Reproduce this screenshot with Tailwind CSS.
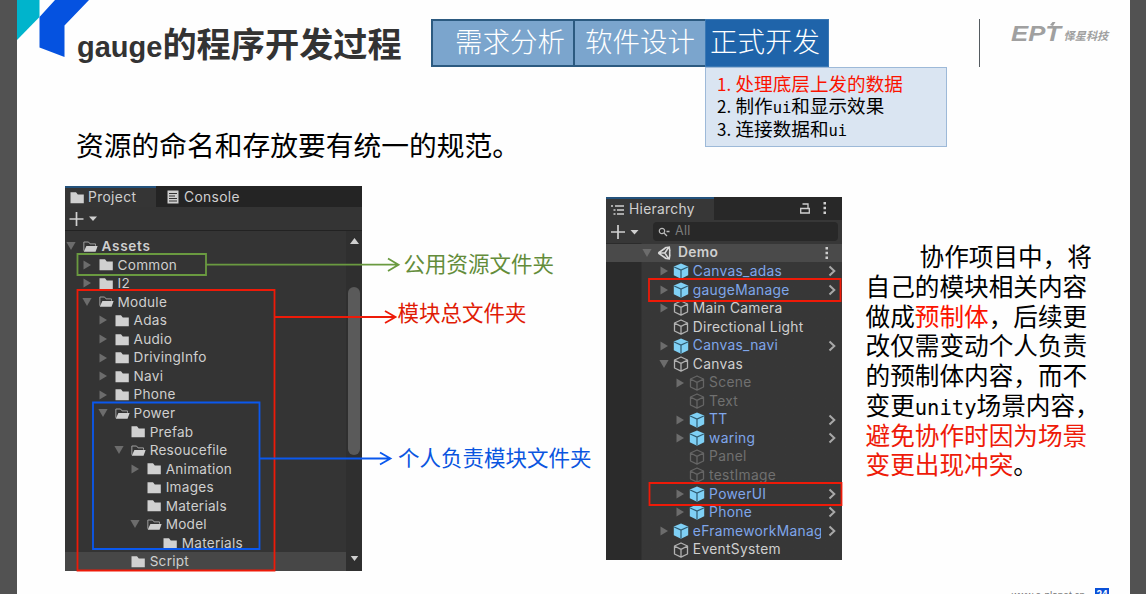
<!DOCTYPE html>
<html lang="zh-CN">
<head>
<meta charset="utf-8">
<title>gauge的程序开发过程</title>
<script src="https://cdn.jsdelivr.net/npm/@tailwindcss/browser@4"></script>
</head>
<body class="bg-white">
<svg class="hidden">
  <symbol id="folder" viewBox="0 0 15 13"><path d="M.5 1.200H6l1.800 2.200h6V12.200H.5z" fill="#d0d0d0"/></symbol>
  <symbol id="folder-open" viewBox="0 0 16 13"><path d="M.9 11V1.700h5l1.600 2h5.800v2" fill="none" stroke="#a5a5a5" stroke-width="1"/><path d="M3.600 6h12L13.400 12.200H.8z" fill="#d0d0d0"/></symbol>
  <symbol id="right" viewBox="0 0 10 10"><path d="M1.500.6v8.800L9 5z" fill="#6c6c6c"/></symbol>
  <symbol id="down" viewBox="0 0 10 10"><path d="M.4 1h9.200L5 9z" fill="#6c6c6c"/></symbol>
  <symbol id="cube-blue" viewBox="0 0 16 16"><path d="M8 .4l7.200 3v8.800L8 15.800.8 12.200V3.400z" fill="#7fd0f5"/><path d="M1.200 4L8 7l6.800-3M8 7v8.500" fill="none" stroke="#2f5a70" stroke-width="1.200"/></symbol>
  <symbol id="cube" viewBox="0 0 16 16"><path d="M8 1l6.500 3v8L8 15.200 1.500 12V4zM1.500 4L8 7.300 14.500 4M8 7.300v7.700" fill="none" stroke="currentColor" stroke-width="1.300" stroke-linejoin="round" opacity=".8"/></symbol>
  <symbol id="unity" viewBox="0 0 16 16"><path d="M1.500 8L10 2M1.500 8l8.500 6M1.500 8H9M9 8l4-6M9 8l4 6M9 2l5-.8 .8 5M9 14l5 .8 .8-5M14.500 5v6" fill="none" stroke="#d8d8d8" stroke-width="1.800"/></symbol>
  <symbol id="chev" viewBox="0 0 8 12"><path d="M1.500 1.500L6.300 6 1.500 10.500" fill="none" stroke="#a8a8a8" stroke-width="2"/></symbol>
</svg>

<div class="relative flex h-[594px] w-[1146px] overflow-hidden bg-[#fefefe] font-['Noto_Sans_CJK_SC',sans-serif] text-black">
  <div class="w-[17px] shrink-0 bg-[#525252]"></div>

  <main class="flex w-[1113px] shrink-0 flex-col">
    <header class="flex h-[67px] shrink-0">
      <svg class="h-[67px] w-[60px] shrink-0 overflow-visible" viewBox="17 0 60 67">
        <path d="M17 0h22.500v17L17 40z" fill="#00b4cc"/>
        <path d="M55 0h34L64.500 25.500V57L39.500 47.500V17z" fill="#0552e0"/>
      </svg>
      <h1 class="flex h-[67px] w-[354px] shrink-0 items-baseline whitespace-nowrap pt-[5px] text-[34.200px] font-bold leading-[74px] text-[#333]"><span class="font-['Liberation_Sans',sans-serif] text-[29px]">gauge</span>的程序开发过程</h1>
      <nav class="mt-[19px] flex h-[48px] w-[398px] text-[27.500px] font-light leading-[38px] text-white">
        <div class="w-[142px] border-2 border-r-0 border-[#2c5a80] bg-[#7ba5cd] pl-[22px]">需求分析</div>
        <div class="w-[132px] border-2 border-r-0 border-[#2c5a80] bg-[#7ba5cd] pl-[10px]">软件设计</div>
        <div class="w-[124px] border border-[#3a78b4] bg-[#1f64aa] pl-[4px] leading-[40px]">正式开发</div>
      </nav>
      <div class="ml-[150px] mt-[19px] h-[48px] w-px bg-[#555b60]"></div>
      <svg class="ml-[30px] mt-[18px] h-[30px] w-[102px]" viewBox="0 0 102 30">
        <text x="1" y="22.500" font-family="Liberation Sans" font-weight="bold" font-style="italic" font-size="22" fill="#a0a0a0" textLength="50" lengthAdjust="spacingAndGlyphs">EPT</text>
        <path d="M40 7l2.500-3h3L43 8z" fill="#a0a0a0"/>
        <text x="53.500" y="21.500" font-family="Noto Sans CJK SC" font-weight="bold" font-style="italic" font-size="11.200" fill="#a0a0a0">怿星科技</text>
      </svg>
    </header>

    <section class="flex h-[119px] shrink-0 justify-between">
      <p class="ml-[59px] mt-[56px] whitespace-nowrap text-[27.750px] leading-[42px]">资源的命名和存放要有统一的规范。</p>
      <ol class="mr-[183px] h-[80px] w-[242px] border border-[#9db9d8] bg-[#dae5f2] pl-[11px] pt-[4px] text-[18.600px] leading-[22px]">
        <li class="flex h-[22.300px] items-baseline text-[#fb1300]"><span class="w-[18.500px] text-[17px]">1.</span>处理底层上发的数据</li>
        <li class="flex h-[22.300px] items-baseline"><span class="w-[18.500px] text-[17px]">2.</span>制作<span class="font-['DejaVu_Sans_Mono',monospace] text-[15.450px]">ui</span>和显示效果</li>
        <li class="flex h-[22.300px] items-baseline"><span class="w-[18.500px] text-[17px]">3.</span>连接数据和<span class="font-['DejaVu_Sans_Mono',monospace] text-[15.450px]">ui</span></li>
      </ol>
    </section>

    <section class="flex h-[400px] shrink-0">
      <div class="ml-[48px] flex h-[385px] w-[297px] shrink-0 flex-col bg-[#343434] font-['Inter',sans-serif] text-[13.800px] tracking-[0.350px] text-[#cfcfcf]">
        <div class="flex h-[21px] shrink-0 bg-[#242424] leading-[21px]">
          <div class="flex w-[91px] items-center border-t-2 border-[#24527c] bg-[#353535] pl-[5px]"><svg class="mr-[3px] h-[13px] w-[15px]"><use href="#folder"/></svg>Project</div>
          <div class="flex items-center pl-[11px] pt-px"><svg class="mr-[5px] h-[14px] w-[12px]" viewBox="0 0 12 14"><path d="M.5.5h11v13H.5z" fill="#cfcfcf"/><path d="M2 3.500h8M2 6h6M2 8.500h8M2 11h8" stroke="#333" stroke-width="1"/></svg>Console</div>
        </div>
        <div class="flex h-[24px] shrink-0 items-center border-b border-[#222] pl-[4px]">
          <svg class="h-[14px] w-[28px]" viewBox="0 0 28 14"><path d="M7.500 0v14M.5 7h14" stroke="#d0d0d0" stroke-width="1.700"/><path d="M20 4.500h8l-4 4.500z" fill="#d0d0d0"/></svg>
        </div>
        <div class="flex h-[340px] overflow-hidden">
          <div id="project" class="w-[281px] pt-[6px] text-[13.600px] tracking-[0.250px]"></div>
          <div class="flex w-[16px] flex-col items-center bg-[#2f2f2f]">
            <svg class="mt-[7px] h-[6px] w-[9px]" viewBox="0 0 9 6"><path d="M0 6h9L4.500 0z" fill="#cfcfcf"/></svg>
            <div class="mt-[43px] h-[168px] w-[12px] rounded-full bg-[#5a5a5a]"></div>
            <svg class="mt-[101px] h-[5px] w-[9px]" viewBox="0 0 9 6"><path d="M0 0h9L4.500 6z" fill="#cfcfcf"/></svg>
          </div>
        </div>
      </div>

      <div class="flex w-[244px] shrink-0 flex-col whitespace-nowrap text-[21.500px] leading-[32px]">
        <div class="ml-[41.500px] mt-[61px] text-[#638c3a]">公用资源文件夹</div>
        <div class="ml-[35.500px] mt-[17px] text-[#e01b05]">模块总文件夹</div>
        <div class="ml-[36px] mt-[113px] text-[#0a55e0]">个人负责模块文件夹</div>
      </div>

      <div class="mt-[11px] flex h-[363px] w-[236px] shrink-0 flex-col bg-[#373737] font-['Inter',sans-serif] text-[13.800px] tracking-[0.300px] text-[#cfcfcf]">
        <div class="flex h-[23px] shrink-0 items-center bg-[#282828]">
          <div class="flex h-full w-[108px] items-center border-t-2 border-[#24527c] bg-[#373737] pl-[5px]"><svg class="mr-[5px] h-[12px] w-[13px]" viewBox="0 0 13 12"><path d="M0 2h2M4 2h9M2.500 6h2M6 6h7M2.500 10h2M6 10h7" stroke="#cfcfcf" stroke-width="1.300"/></svg>Hierarchy</div>
          <svg class="mb-[2px] ml-[86px] h-[12px] w-[10px]" viewBox="0 0 10 12"><path d="M.7 6.500h8.600v4.500H.7zM2.500 2h5.500v4.500" fill="none" stroke="#cfcfcf" stroke-width="1.300"/></svg>
          <svg class="mb-[2px] ml-[13px] h-[12px] w-[4px]" viewBox="0 0 4 12"><path d="M.5 0h2.500v2.500H.5zM.5 4.700h2.500v2.500H.5zM.5 9.500h2.500v2.500H.5z" fill="#cfcfcf"/></svg>
        </div>
        <div class="flex h-[23px] shrink-0 items-center pl-[5px]">
          <svg class="h-[14px] w-[28px]" viewBox="0 0 28 14"><path d="M7 0v14M0 7h14" stroke="#d0d0d0" stroke-width="1.700"/><path d="M19.500 5h8l-4 4.500z" fill="#d0d0d0"/></svg>
          <div class="ml-[14px] flex h-[19px] w-[185px] items-center rounded-[4px] bg-[#282828] pl-[5px] text-[12.500px] text-[#7d7d7d]"><svg class="mr-[5px] h-[10px] w-[12px]" viewBox="0 0 12 10"><circle cx="4" cy="4" r="2.700" fill="none" stroke="#bbb" stroke-width="1.200"/><path d="M6 6l3 3M8.500 4.500h3" stroke="#bbb" stroke-width="1.300"/></svg>All</div>
        </div>
        <div id="hierarchy" class="flex-1 bg-linear-to-r from-[#2b2b2b] from-[35px] to-[#373737] to-[36px] pt-[0.500px]"></div>
      </div>

      <div class="ml-[23.500px] mt-[55px] whitespace-nowrap text-[24.650px] leading-[29.750px]">
        <div class="pl-[54px]">协作项目中，将</div>
        <div>自己的模块相关内容</div>
        <div>做成<span class="text-[#fb1300]">预制体</span>，后续更</div>
        <div>改仅需变动个人负责</div>
        <div>的预制体内容，而不</div>
        <div class="flex h-[29.750px] items-baseline">变更<span class="font-['DejaVu_Sans_Mono',monospace] text-[20.500px] leading-none">unity</span>场景内容，</div>
        <div class="text-[#ee1a08]">避免协作时因为场景</div>
        <div><span class="text-[#ee1a08]">变更出现冲突</span>。</div>
      </div>
    </section>

    <footer class="flex h-[20px] shrink-0 items-start justify-end pr-[21px] pt-[2px]">
      <span class="mr-[10px] mt-[1px] font-['Liberation_Sans',sans-serif] text-[10px] leading-[14px] text-[#777]">www.e-planet.cn</span>
      <span class="h-[14px] w-[14px] bg-[#0a50d8] text-center font-['Liberation_Sans',sans-serif] text-[10px] font-bold leading-[14px] text-white">24</span>
    </footer>
  </main>

  <div class="w-[16px] shrink-0 bg-[#525252]"></div>

  <!-- callout frames and arrows over the panels -->
  <svg class="absolute left-0 top-0 h-[594px] w-[1146px]" viewBox="0 0 1146 594" fill="none" stroke-width="1.800">
    <g stroke="#6a9a40"><path d="M77.500 254h128.500v21H77.500zM206 264.700h191M388 258.500l10.500 6.200-10.500 6.200"/></g>
    <g stroke="#ee1a08"><path d="M77.500 290h197v280.500h-197zM274.500 317h120M385 311l10.500 6-10.500 6"/><path d="M649 279h191.500v22H649zM649.500 483h192v22h-192z"/></g>
    <g stroke="#0a58ee"><path d="M93 402.500h166.500v146.500H93zM259.500 458.500h130M380 452.500l10.500 6-10.500 6"/></g>
  </svg>
</div>

<script>
  const icon = (id, cls) => `<svg class="${cls}"><use href="#${id}"/></svg>`;
  const arrow = a => a ? icon(a, 'h-[10px] w-[10px] shrink-0') : '<span class="w-[10px] shrink-0"></span>';

  const project = [
    [0, 'down', 'folder-open', 'Assets'], [1, 'right', 'folder', 'Common'], [1, 'right', 'folder', 'I2'],
    [1, 'down', 'folder-open', 'Module'], [2, 'right', 'folder', 'Adas'], [2, 'right', 'folder', 'Audio'],
    [2, 'right', 'folder', 'DrivingInfo'], [2, 'right', 'folder', 'Navi'], [2, 'right', 'folder', 'Phone'],
    [2, 'down', 'folder-open', 'Power'], [3, '', 'folder', 'Prefab'], [3, 'down', 'folder-open', 'Resoucefile'],
    [4, 'right', 'folder', 'Animation'], [4, '', 'folder', 'Images'], [4, '', 'folder', 'Materials'],
    [4, 'down', 'folder-open', 'Model'], [5, '', 'folder', 'Materials'], [3, '', 'folder', 'Script']
  ];
  document.getElementById('project').innerHTML = project.map(([l, a, f, t]) =>
    `<div class="flex h-[18.560px] items-center ${t === 'Script' ? 'bg-[#474747]' : ''}" style="padding-left:${1 + 16.05 * l}px">
      ${arrow(a)}${icon(f, 'ml-[6.500px] mr-[4px] h-[13px] w-[15px] shrink-0')}<span class="${l ? '' : 'font-semibold tracking-[0.700px]'}">${t}</span></div>`).join('');

  const hierarchy = [
    [1, 'right', 'b', 'Canvas_adas', 1], [1, 'right', 'b', 'gaugeManage', 1], [1, 'right', 'w', 'Main Camera'],
    [1, '', 'w', 'Directional Light'], [1, 'right', 'b', 'Canvas_navi', 1], [1, 'down', 'w', 'Canvas'],
    [2, 'right', 'g', 'Scene'], [2, '', 'g', 'Text'], [2, 'right', 'b', 'TT', 1], [2, 'right', 'b', 'waring', 1],
    [2, '', 'g', 'Panel'], [2, '', 'g', 'testImage'], [2, 'right', 'b', 'PowerUI', 1], [2, 'right', 'b', 'Phone', 1],
    [1, 'right', 'b', 'eFrameworkManager', 1], [1, '', 'w', 'EventSystem']
  ];
  const tone = { b: 'text-[#7fa6ea]', w: 'text-[#cfcfcf]', g: 'text-[#707070]' };
  document.getElementById('hierarchy').innerHTML =
    `<div class="flex h-[18.560px] items-center bg-[#4a4a4a] pl-[36px] pr-[13px]">${arrow('down')}${icon('unity', 'ml-[5px] mr-[7px] h-[14px] w-[14px] shrink-0')}<span class="flex-1 font-semibold">Demo</span>
      <svg class="h-[12px] w-[4px]" viewBox="0 0 4 12"><path d="M.5 0h2.500v2.500H.5zM.5 4.700h2.500v2.500H.5zM.5 9.500h2.500v2.500H.5z" fill="#cfcfcf"/></svg></div>` +
    hierarchy.map(([l, a, k, t, c]) =>
    `<div class="flex h-[18.560px] items-center pr-[6px] ${tone[k]}" style="padding-left:${36.5 + 16.3 * l}px">
      ${arrow(a)}${icon(k === 'b' ? 'cube-blue' : 'cube', 'ml-[4px] mr-[4px] h-[16px] w-[16px] shrink-0')}<span class="mr-[7px] flex-1 overflow-hidden whitespace-nowrap">${t}</span>${c ? icon('chev', 'h-[12px] w-[8px] shrink-0') : ''}</div>`).join('');
</script>
</body>
</html>
